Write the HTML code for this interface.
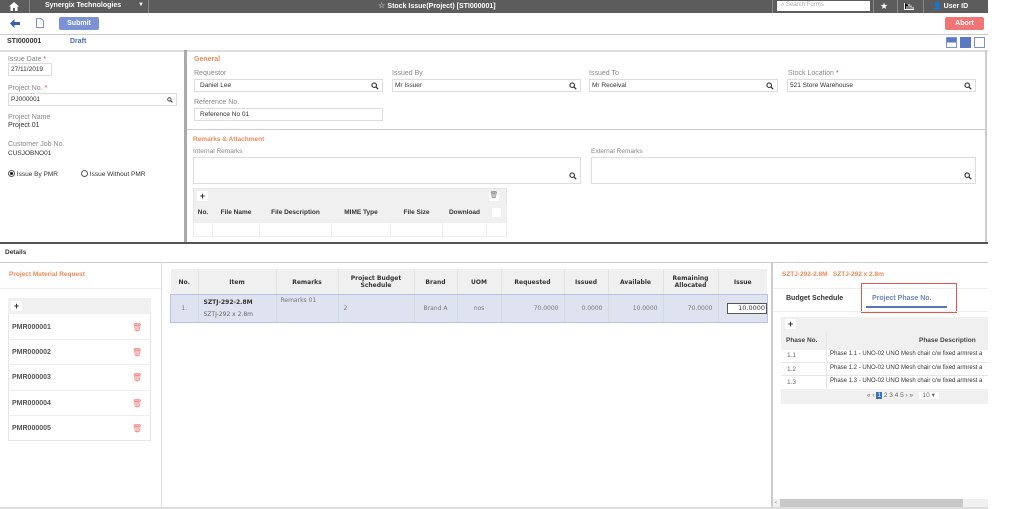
<!DOCTYPE html><html><head><style>
*{box-sizing:border-box;margin:0;padding:0}
body{width:1024px;height:509px;position:relative;background:#fff;font-family:"Liberation Sans",sans-serif;font-size:7px;color:#333;overflow:hidden}
.a{position:absolute}
.lbl{color:#888;font-size:7px}
.in{position:absolute;border:1px solid #ddd;background:#fff;font-size:6.5px;padding:2px 5px;height:13px;color:#333}
.q{position:absolute;right:3px;top:2px;width:8px;height:8px}
.or{color:#f08a5a;font-weight:bold;font-size:7px}
table{border-collapse:collapse}
td,th{font-size:6.5px}
</style></head><body>
<svg width="0" height="0" style="position:absolute"><defs><symbol id="mg" viewBox="0 0 10 10"><circle cx="4" cy="4" r="2.8" fill="none" stroke="#333" stroke-width="1.4"/><path d="M6 6L9 9" stroke="#333" stroke-width="1.6"/></symbol></defs></svg>
<!-- top bar -->
<div class="a" style="left:0;top:0;width:988px;height:13px;background:#5c5c5c"></div>
<svg class="a" style="left:9px;top:2px" width="10" height="9" viewBox="0 0 10 9"><path d="M5 0L0 4.5H1.5V9H4V6H6V9H8.5V4.5H10Z" fill="#fff"/></svg>
<div class="a" style="left:29px;top:0;width:1px;height:13px;background:#888"></div>
<div class="a" style="left:45px;top:2px;color:#fff;font-weight:bold;font-size:7px">Synergix Technologies</div>
<div class="a" style="left:138px;top:2px;color:#fff;font-size:6px">▼</div>
<div class="a" style="left:148px;top:0;width:1px;height:13px;background:#888"></div>
<div class="a" style="left:378px;top:1px;color:#fff;font-size:8px">☆ <b style="font-size:7px">Stock Issue(Project) [STI000001]</b></div>
<div class="a" style="left:772px;top:0;width:1px;height:13px;background:#888"></div>
<div class="a" style="left:777px;top:1px;width:93px;height:10px;background:#fff;color:#aaa;font-size:6px;padding:1px 4px">⌕ Search Forms</div>
<div class="a" style="left:873px;top:0;width:1px;height:13px;background:#888"></div>
<div class="a" style="left:880px;top:1px;color:#fff;font-size:9px">★</div>
<div class="a" style="left:897px;top:0;width:1px;height:13px;background:#888"></div>
<svg class="a" style="left:904px;top:3px" width="10" height="7" viewBox="0 0 10 7"><path d="M0.5 0V6.5H10M3 6V3M5 6V1M7 6V2.5M9 6V4" stroke="#fff" stroke-width="1"/></svg>
<div class="a" style="left:923px;top:0;width:1px;height:13px;background:#888"></div>
<div class="a" style="left:933px;top:2px;color:#fff;font-weight:bold;font-size:7px">👤 User ID</div>
<!-- toolbar -->
<svg class="a" style="left:10px;top:19px" width="10" height="9" viewBox="0 0 10 9"><path d="M0 4.5L4.5 0V3H10V6H4.5V9Z" fill="#3a5fb0"/></svg>
<svg class="a" style="left:36px;top:18px" width="8" height="10" viewBox="0 0 8 10"><path d="M0.5 0.5H5L7.5 3V9.5H0.5Z" fill="none" stroke="#7a95d0"/></svg>
<div class="a" style="left:59px;top:17px;width:40px;height:13px;background:#7b93d6;color:#fff;font-weight:bold;text-align:center;line-height:13px;border-radius:2px">Submit</div>
<div class="a" style="left:945px;top:17px;width:39px;height:13px;background:#f07575;color:#fff;font-weight:bold;text-align:center;line-height:13px;border-radius:2px">Abort</div>
<div class="a" style="left:0;top:34px;width:988px;height:1px;background:#ccc"></div>
<div class="a" style="left:7px;top:38px;font-weight:bold;color:#333">STI000001</div>
<div class="a" style="left:70px;top:38px;font-weight:bold;color:#4a6db5">Draft</div>
<div class="a" style="left:946px;top:37px;width:11px;height:11px;border:1px solid #7b93d6;background:linear-gradient(#5b79c0 50%,#fff 50%)"></div>
<div class="a" style="left:960px;top:37px;width:11px;height:11px;background:#5b79c0"></div>
<div class="a" style="left:974px;top:37px;width:11px;height:11px;border:1px solid #7b93d6"></div>
<div class="a" style="left:0;top:50px;width:988px;height:2px;background:#ddd"></div>
<!-- left panel -->
<div class="a lbl" style="left:8px;top:56px">Issue Date <span style="color:#e33">*</span></div>
<div class="in" style="left:8px;top:63px;width:44px;padding-left:2px">27/11/2019</div>
<div class="a lbl" style="left:8px;top:85px">Project No. <span style="color:#e33">*</span></div>
<div class="in" style="left:8px;top:93px;width:169px;padding-left:2px">PJ000001<svg class="q" style="width:6px;height:6px;top:3px"><use href="#mg"/></svg></div>
<div class="a lbl" style="left:8px;top:114px">Project Name</div>
<div class="a" style="left:8px;top:122px">Project 01</div>
<div class="a lbl" style="left:8px;top:141px">Customer Job No.</div>
<div class="a" style="left:8px;top:150px;font-size:6.5px">CUSJOBNO01</div>
<div class="a" style="left:8px;top:170px;font-size:6.5px"><span style="display:inline-block;width:7px;height:7px;border-radius:50%;border:1px solid #555;background:radial-gradient(#222 45%,#fff 50%);vertical-align:-1px"></span> Issue By PMR</div>
<div class="a" style="left:81px;top:170px;font-size:6.5px"><span style="display:inline-block;width:7px;height:7px;border-radius:50%;border:1px solid #555;vertical-align:-1px"></span> Issue Without PMR</div>
<div class="a" style="left:184px;top:50px;width:3px;height:193px;background:#aaa"></div>
<div class="a" style="left:985px;top:50px;width:2px;height:193px;background:#ccc"></div>
<!-- general -->
<div class="a or" style="left:194px;top:56px">General</div>
<div class="a lbl" style="left:194px;top:70px">Requestor</div>
<div class="in" style="left:194px;top:79px;width:189px">Daniel Lee<svg class="q"><use href="#mg"/></svg></div>
<div class="a lbl" style="left:392px;top:70px">Issued By</div>
<div class="in" style="left:392px;top:79px;width:189px;padding-left:2px">Mr Issuer<svg class="q"><use href="#mg"/></svg></div>
<div class="a lbl" style="left:589px;top:70px">Issued To</div>
<div class="in" style="left:589px;top:79px;width:189px;padding-left:2px">Mr Receival<svg class="q"><use href="#mg"/></svg></div>
<div class="a lbl" style="left:788px;top:70px">Stock Location <span style="color:#e33">*</span></div>
<div class="in" style="left:787px;top:79px;width:189px;padding-left:2px">521 Store Warehouse<svg class="q"><use href="#mg"/></svg></div>
<div class="a lbl" style="left:194px;top:99px">Reference No.</div>
<div class="in" style="left:194px;top:108px;width:189px">Reference No 01</div>
<div class="a" style="left:187px;top:129px;width:798px;height:1px;background:#ccc"></div>
<div class="a or" style="left:193px;top:136px;font-size:6.5px">Remarks &amp; Attachment</div>
<div class="a lbl" style="left:193px;top:148px;font-size:6.5px">Internal Remarks</div>
<div class="in" style="left:193px;top:157px;width:388px;height:27px"><svg class="q" style="top:14px"><use href="#mg"/></svg></div>
<div class="a lbl" style="left:591px;top:148px;font-size:6.5px">External Remarks</div>
<div class="in" style="left:591px;top:157px;width:385px;height:27px"><svg class="q" style="top:14px"><use href="#mg"/></svg></div>
<div class="a" style="left:193px;top:188px;width:314px;height:49px;background:#f0f0f0;border:1px solid #e6e6e6"></div>
<div class="a" style="left:197px;top:191px;width:11px;height:10px;background:#fff;font-weight:bold;text-align:center;line-height:10px;font-size:9px">+</div>
<div class="a" style="left:489px;top:191px;width:10px;height:10px;background:#fff;text-align:center;font-size:7px;color:#777">🗑</div>
<table class="a" style="left:193px;top:204px;width:314px;table-layout:fixed">
<tr style="height:18px;background:#f0f0f0;font-weight:bold">
<th style="width:19px">No.</th><th style="width:47px">File Name</th><th style="width:72px">File Description</th><th style="width:59px">MIME Type</th><th style="width:52px">File Size</th><th style="width:44px">Download</th><th><div style="width:9px;height:9px;background:#fff;margin:auto"></div></th></tr>
<tr style="height:14px;background:#fff"><td style="border:1px solid #eee"></td><td style="border:1px solid #eee"></td><td style="border:1px solid #eee"></td><td style="border:1px solid #eee"></td><td style="border:1px solid #eee"></td><td style="border:1px solid #eee"></td><td style="border:1px solid #eee"></td></tr></table>
<div class="a" style="left:0;top:242px;width:988px;height:2px;background:#555"></div>
<div class="a" style="left:5px;top:249px;font-weight:bold;font-size:6.5px">Details</div>
<div class="a" style="left:0;top:262px;width:988px;height:1px;background:#ccc"></div>
<!-- bottom left -->
<div class="a" style="left:161px;top:262px;width:1px;height:247px;background:#ddd"></div>
<div class="a or" style="left:9px;top:271px;font-size:6.5px">Project Material Request</div>
<div class="a" style="left:0;top:288px;width:161px;height:1px;background:#eee"></div>
<div class="a" style="left:8px;top:298px;width:143px;height:143px;border:1px solid #e6e6e6"></div>
<div class="a" style="left:8px;top:298px;width:143px;height:16px;background:#f0f0f0"></div>
<div class="a" style="left:11px;top:301px;width:11px;height:10px;background:#fff;font-weight:bold;text-align:center;line-height:10px;font-size:9px">+</div>
<div class="a" style="left:12px;top:324px;font-weight:bold;color:#555">PMR000001</div><div class="a" style="left:132px;top:323px;color:#f07575;font-size:8px">🗑</div>
<div class="a" style="left:8px;top:339px;width:143px;height:1px;background:#eee"></div>
<div class="a" style="left:12px;top:349px;font-weight:bold;color:#555">PMR000002</div><div class="a" style="left:132px;top:348px;color:#f07575;font-size:8px">🗑</div>
<div class="a" style="left:8px;top:364px;width:143px;height:1px;background:#eee"></div>
<div class="a" style="left:12px;top:374px;font-weight:bold;color:#555">PMR000003</div><div class="a" style="left:132px;top:373px;color:#f07575;font-size:8px">🗑</div>
<div class="a" style="left:8px;top:390px;width:143px;height:1px;background:#eee"></div>
<div class="a" style="left:12px;top:400px;font-weight:bold;color:#555">PMR000004</div><div class="a" style="left:132px;top:399px;color:#f07575;font-size:8px">🗑</div>
<div class="a" style="left:8px;top:415px;width:143px;height:1px;background:#eee"></div>
<div class="a" style="left:12px;top:425px;font-weight:bold;color:#555">PMR000005</div><div class="a" style="left:132px;top:424px;color:#f07575;font-size:8px">🗑</div>
<!-- details table -->
<table class="a" style="left:171px;top:269px;width:596px;table-layout:fixed;font-family:'DejaVu Sans',sans-serif">
<colgroup><col style="width:27px"><col style="width:78px"><col style="width:62px"><col style="width:76px"><col style="width:43px"><col style="width:44px"><col style="width:63px"><col style="width:44px"><col style="width:55px"><col style="width:55px"><col style="width:49px"></colgroup>
<tr style="height:26px;background:#f0f0f0;font-weight:bold;text-align:center">
<th style="border-right:1px solid #e3e3e3;font-size:6px">No.</th><th style="border-right:1px solid #e3e3e3;font-size:6px">Item</th><th style="border-right:1px solid #e3e3e3;font-size:6px">Remarks</th><th style="border-right:1px solid #e3e3e3;font-size:6px">Project Budget<br>Schedule</th><th style="border-right:1px solid #e3e3e3;font-size:6px">Brand</th><th style="border-right:1px solid #e3e3e3;font-size:6px">UOM</th><th style="border-right:1px solid #e3e3e3;font-size:6px">Requested</th><th style="border-right:1px solid #e3e3e3;font-size:6px">Issued</th><th style="border-right:1px solid #e3e3e3;font-size:6px">Available</th><th style="border-right:1px solid #e3e3e3;font-size:6px">Remaining<br>Allocated</th><th style="font-size:6px">Issue</th></tr>
<tr style="height:27px;background:#dfe3f0;outline:1px solid #b8c2ea;color:#777">
<td style="text-align:center;font-size:6px;border-right:1px solid #cdd">1.</td>
<td style="padding-left:5px;font-size:6px;line-height:12px;color:#333;border-right:1px solid #cdd;white-space:nowrap"><b>SZTJ-292-2.8M</b><br><span style="color:#666">SZTJ-292 x 2.8m</span></td>
<td style="vertical-align:top;padding:2px 0 0 4px;font-size:6px;border-right:1px solid #cdd">Remarks 01</td>
<td style="padding-left:5px;font-size:6px;border-right:1px solid #cdd">2</td>
<td style="text-align:center;font-size:6px;border-right:1px solid #cdd">Brand A</td>
<td style="text-align:center;font-size:6px;border-right:1px solid #cdd">nos</td>
<td style="text-align:right;padding-right:5px;font-size:6px;border-right:1px solid #cdd">70.0000</td>
<td style="text-align:right;padding-right:5px;font-size:6px;border-right:1px solid #cdd">0.0000</td>
<td style="text-align:right;padding-right:5px;font-size:6px;border-right:1px solid #cdd">10.0000</td>
<td style="text-align:right;padding-right:5px;font-size:6px;border-right:1px solid #cdd">70.0000</td>
<td style="padding-left:8px"><div style="background:#fff;border:1px solid #555;font-size:6.5px;text-align:right;height:11px;line-height:9px;color:#333;padding-right:1px">10.0000</div></td></tr></table>
<!-- right panel -->
<div class="a" style="left:771px;top:262px;width:2px;height:247px;background:#ccc"></div>
<div class="a or" style="left:782px;top:271px;font-size:6.5px">SZTJ-292-2.8M&nbsp;&nbsp; SZTJ-292 x 2.8m</div>
<div class="a" style="left:773px;top:288px;width:215px;height:1px;background:#eee"></div>
<div class="a" style="left:786px;top:295px;font-weight:bold;font-size:7px">Budget Schedule</div>
<div class="a" style="left:861px;top:283px;width:96px;height:30px;border:1px solid #e05555"></div>
<div class="a" style="left:872px;top:295px;font-weight:bold;font-size:7px;color:#6a85c8">Project Phase No.</div>
<div class="a" style="left:866px;top:306px;width:81px;height:2px;background:#5b74b8"></div>
<div class="a" style="left:773px;top:311px;width:215px;height:1px;background:#eee"></div>
<div class="a" style="left:781px;top:317px;width:207px;height:87px;background:#f0f0f0"></div>
<div class="a" style="left:785px;top:319px;width:11px;height:10px;background:#fff;font-weight:bold;text-align:center;line-height:10px;font-size:9px">+</div>
<div class="a" style="left:781px;top:332px;width:207px;height:18px;font-weight:bold;font-size:6.5px;color:#444"><span class="a" style="left:5px;top:5px">Phase No.</span><span class="a" style="left:138px;top:5px">Phase Description</span></div>
<div class="a" style="left:781px;top:350px;width:207px;height:39px;background:#fff;overflow:hidden"></div>
<div class="a" style="left:826px;top:332px;width:1px;height:57px;background:#e6e6e6"></div>
<div class="a" style="left:781px;top:362px;width:207px;height:1px;background:#e6e6e6"></div>
<div class="a" style="left:781px;top:375px;width:207px;height:1px;background:#e6e6e6"></div>
<div class="a" style="left:787px;top:352px;font-size:6.5px;color:#666">1.1</div><div class="a" style="left:830px;top:351px;font-size:6px;white-space:nowrap">Phase 1.1 - UNO-02 UNO Mesh chair c/w fixed armrest a</div>
<div class="a" style="left:787px;top:366px;font-size:6.5px;color:#666">1.2</div><div class="a" style="left:830px;top:365px;font-size:6px;white-space:nowrap">Phase 1.2 - UNO-02 UNO Mesh chair c/w fixed armrest a</div>
<div class="a" style="left:787px;top:379px;font-size:6.5px;color:#666">1.3</div><div class="a" style="left:830px;top:378px;font-size:6px;white-space:nowrap">Phase 1.3 - UNO-02 UNO Mesh chair c/w fixed armrest a</div>
<div class="a" style="left:988px;top:317px;width:36px;height:90px;background:#fff"></div>
<div class="a" style="left:867px;top:391px;font-size:6.5px;color:#666;white-space:nowrap">« ‹ <span style="background:#3a6fc0;color:#fff;padding:0 1px">1</span> 2 3 4 5 › » &nbsp;&nbsp;<span style="background:#fff;padding:0 4px">10 ▾</span></div>
<div class="a" style="left:773px;top:499px;width:215px;height:9px;background:#f0f0f0"></div>
<div class="a" style="left:775px;top:500px;font-size:6px;color:#888">‹</div>
<div class="a" style="left:780px;top:499px;width:183px;height:8px;background:#c8c8c8"></div>
<div class="a" style="left:0;top:507px;width:988px;height:2px;background:#ddd"></div>
</body></html>
